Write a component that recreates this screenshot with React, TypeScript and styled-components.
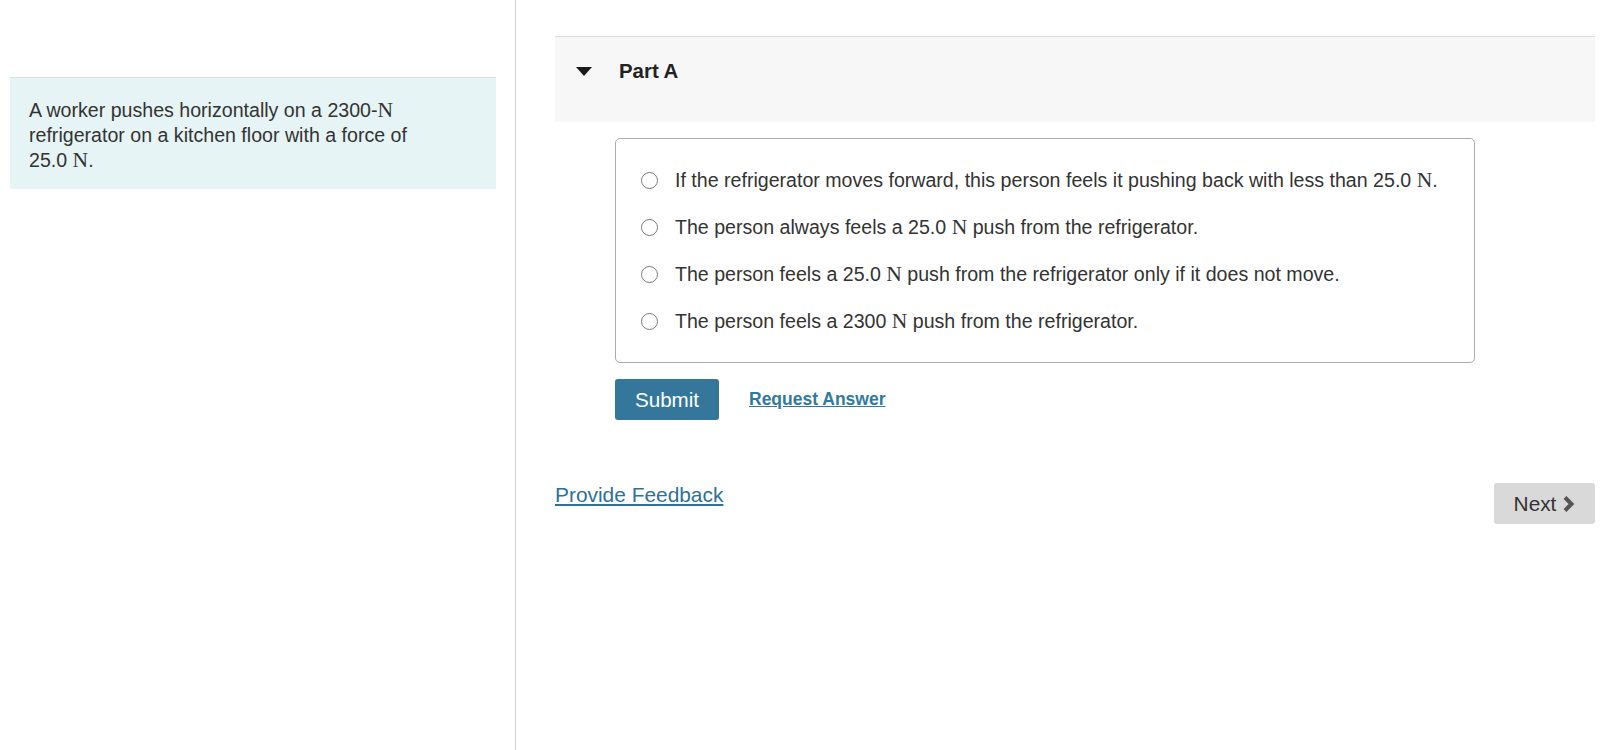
import React from "react";
import styled, { createGlobalStyle } from "styled-components";

const GlobalStyle = createGlobalStyle`
  html, body {
    margin: 0;
    padding: 0;
    background: #ffffff;
  }
  body {
    font-family: "Liberation Sans", Arial, Helvetica, sans-serif;
    color: #333333;
  }
  * { box-sizing: border-box; }
`;

const Page = styled.div`
  display: flex;
  width: 1618px;
  height: 750px;
  overflow: hidden;
`;

const LeftColumn = styled.aside`
  width: 516px;
  flex: none;
  border-right: 1px solid #c9d1d8;
  padding: 77px 19px 0 10px;
`;

const IntroPanel = styled.div`
  background: #e7f4f5;
  border-top: 1px solid #dcdfe0;
  padding: 20px 40px 16px 19px;
  font-size: 19.6px;
  line-height: 25px;
  color: #333333;
`;

const MathN = styled.span`
  font-family: "Liberation Serif", "Times New Roman", serif;
  font-size: 1.1em;
  line-height: 0;
`;

const NoWrap = styled.span`
  white-space: nowrap;
`;

const RightColumn = styled.main`
  flex: 1;
  padding: 36px 23px 0 39px;
  display: flex;
  flex-direction: column;
`;

const PartHeader = styled.div`
  height: 86px;
  background: #f7f7f7;
  border-top: 1px solid #dddddd;
  display: flex;
  align-items: flex-start;
  padding: 21px 0 0 21px;
`;

const Caret = styled.svg`
  width: 16px;
  height: 9px;
  margin-top: 9px;
  flex: none;
`;

const PartTitle = styled.h2`
  margin: 0 0 0 27px;
  font-size: 20.4px;
  line-height: 26px;
  font-weight: 700;
  color: #222222;
`;

const PartBody = styled.div`
  padding-left: 60px;
  padding-top: 16px;
`;

const OptionsBox = styled.div`
  width: 860px;
  border: 1px solid #ababab;
  border-radius: 5px;
  padding: 18px 0 17px 25px;
`;

const OptionRow = styled.label`
  display: flex;
  align-items: center;
  height: 47px;
  font-size: 19.6px;
  line-height: 25px;
  color: #333333;
`;

const Radio = styled.span`
  width: 17px;
  height: 17px;
  border-radius: 50%;
  border: 1px solid #7a7a7a;
  background: #ffffff;
  flex: none;
  margin-right: 17px;
`;

const ActionRow = styled.div`
  display: flex;
  align-items: center;
  margin-top: 16px;
  gap: 30px;
`;

const SubmitButton = styled.button`
  width: 104px;
  height: 41px;
  background: #35779a;
  color: #ffffff;
  border: none;
  border-radius: 3px;
  font-family: "Liberation Sans", Arial, sans-serif;
  font-size: 20.6px;
  padding: 0;
`;

const RequestLink = styled.a`
  font-size: 17.5px;
  font-weight: 700;
  color: #2f7aa0;
  text-decoration: underline;
`;

const FooterRow = styled.div`
  display: flex;
  justify-content: space-between;
  align-items: flex-start;
  margin-top: 63px;
`;

const FeedbackLink = styled.a`
  font-size: 20.9px;
  line-height: 24px;
  color: #2e7098;
  text-decoration: underline;
`;

const NextButton = styled.button`
  width: 101px;
  height: 41px;
  background: #d9d9d9;
  border: none;
  border-radius: 3px;
  color: #333333;
  font-family: "Liberation Sans", Arial, sans-serif;
  font-size: 20.8px;
  display: flex;
  align-items: center;
  justify-content: center;
  gap: 5px;
  padding: 0;
`;

const Chevron = styled.svg`
  width: 14px;
  height: 18px;
`;

const options: React.ReactNode[] = [
  <>
    If the refrigerator moves forward, this person feels it pushing back with less than 25.0 <MathN>N</MathN>.
  </>,
  <>
    The person always feels a 25.0 <MathN>N</MathN> push from the refrigerator.
  </>,
  <>
    The person feels a 25.0 <MathN>N</MathN> push from the refrigerator only if it does not move.
  </>,
  <>
    The person feels a 2300 <MathN>N</MathN> push from the refrigerator.
  </>,
];

export default function App() {
  return (
    <>
      <GlobalStyle />
      <Page>
        <LeftColumn>
          <IntroPanel>
            A worker pushes horizontally on a 2300-<MathN>N</MathN> refrigerator on a kitchen floor with a force of{" "}
            <NoWrap>
              25.0 <MathN>N</MathN>.
            </NoWrap>
          </IntroPanel>
        </LeftColumn>
        <RightColumn>
          <PartHeader>
            <Caret viewBox="0 0 16 9">
              <polygon points="0,0 16,0 8,9" fill="#1a1a1a" />
            </Caret>
            <PartTitle>Part A</PartTitle>
          </PartHeader>
          <PartBody>
            <OptionsBox>
              {options.map((o, i) => (
                <OptionRow key={i}>
                  <Radio />
                  <span>{o}</span>
                </OptionRow>
              ))}
            </OptionsBox>
            <ActionRow>
              <SubmitButton>Submit</SubmitButton>
              <RequestLink href="#">Request Answer</RequestLink>
            </ActionRow>
          </PartBody>
          <FooterRow>
            <FeedbackLink href="#">Provide Feedback</FeedbackLink>
            <NextButton>
              Next
              <Chevron viewBox="0 0 14 18">
                <polyline points="4,2.5 10.5,9 4,15.5" fill="none" stroke="#555555" strokeWidth="4" strokeLinejoin="miter" />
              </Chevron>
            </NextButton>
          </FooterRow>
        </RightColumn>
      </Page>
    </>
  );
}
